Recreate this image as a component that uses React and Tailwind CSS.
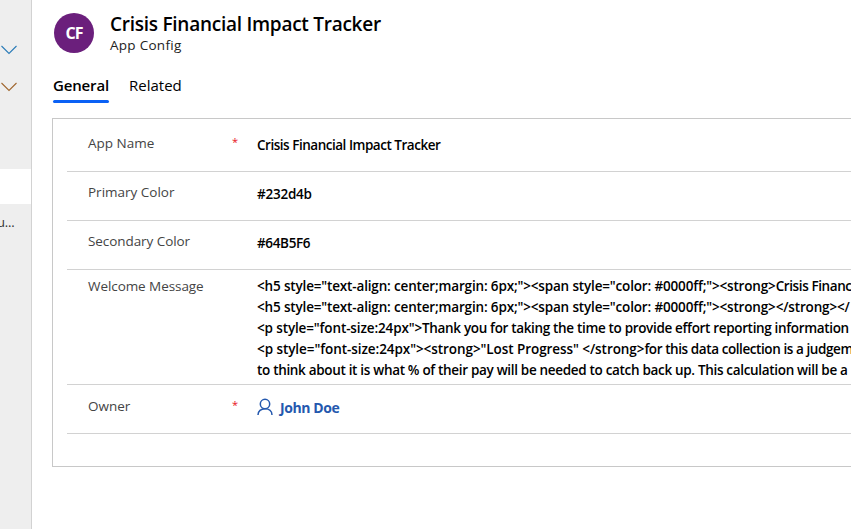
import React from "react";

function Chevron({ className }) {
  return (
    <svg className={className} width="18" height="10" viewBox="0 0 18 10" fill="none" stroke="currentColor" strokeWidth="1.1">
      <path d="M1.5 1 L9 8.5 L16.5 1" />
    </svg>
  );
}

function Person() {
  return (
    <svg className="mt-px" width="16" height="18" viewBox="0 0 16 18" fill="none" stroke="currentColor" strokeWidth="1.5">
      <circle cx="8" cy="6" r="4.7" />
      <path d="M1 17 C1 13.2 4 10.7 8 10.7 C12 10.7 15 13.2 15 17" />
    </svg>
  );
}

function Row({ label, labelClass, required, height, top, children }) {
  return (
    <div className={`flex border-b border-[#d2d2d2] pl-[21px] ${height}`}>
      <div className={`w-[144px] shrink-0 text-[13.5px] leading-5 text-[#444] ${top}`}>
        <span className={labelClass}>{label}</span>
      </div>
      <div className={`w-[25px] shrink-0 text-[11px] leading-[18px] text-[#e81123] ${top}`}>{required ? "*" : ""}</div>
      {children}
    </div>
  );
}

const value = "whitespace-pre text-[13.5px] leading-[21px] font-semibold text-black";

export default function App() {
  return (
    <div className="flex h-[529px] w-[851px] overflow-hidden bg-white font-['Open_Sans',sans-serif]">
      <aside className="h-full w-8 shrink-0 overflow-hidden border-r border-[#d2d2d2] bg-[#eeeeee]">
        <div className="flex h-[169px] flex-col pt-[45px]">
          <Chevron className="text-[#2b7cb8]" />
          <Chevron className="mt-[27px] text-[#a0672f]" />
        </div>
        <div className="h-[35px] bg-white" />
        <div className="-ml-[3px] pt-[8px] text-[13px] leading-5 text-[#333]"><span className="tracking-[-0.2px]">u...</span></div>
      </aside>
      <main className="min-w-0 flex-1">
        <header className="flex h-[67px] pt-[13px] pl-[22px]">
          <div className="flex size-10 items-center justify-center rounded-full bg-[#6b1f7c] text-[16px] font-bold tracking-[-1px] text-white">CF</div>
          <div className="pl-4 whitespace-nowrap">
            <h1 className="-mt-[3px] text-[19px] leading-7 font-semibold text-black"><span className="tracking-[-0.26px]">Crisis Financial Impact Tracker</span></h1>
            <p className="-mt-px text-[13.5px] leading-4 text-[#222]"><span className="tracking-[0.28px]">App Config</span></p>
          </div>
        </header>
        <nav className="flex h-[51px] gap-5 pt-[7px] pl-[21px] text-[15px] leading-[23px] text-black">
          <div className="w-14 font-semibold"><span className="tracking-[-0.15px]">General</span><div className="mt-[3px] h-[3px] rounded-full bg-[#0b61f5]" /></div>
          <div><span>Related</span></div>
        </nav>
        <section className="ml-5 h-[349px] border border-r-0 border-[#c8c8c8] pl-[14px]">
          <Row label="App Name" required height="h-[53px]" top="pt-[14px]">
            <div className={`pt-[16px] ${value}`}><span className="tracking-[-0.48px]">Crisis Financial Impact Tracker</span></div>
          </Row>
          <Row label="Primary Color" height="h-[49px]" top="pt-[10px]">
            <div className={`pt-[12px] ${value}`}><span className="tracking-[-0.25px]">#232d4b</span></div>
          </Row>
          <Row label="Secondary Color" labelClass="tracking-[-0.07px]" height="h-[49px]" top="pt-[10px]">
            <div className={`pt-[12px] ${value}`}><span className="tracking-[-0.35px]">#64B5F6</span></div>
          </Row>
          <Row label="Welcome Message" labelClass="tracking-[-0.07px]" height="h-[115px]" top="pt-[6px]">
            <div className={`pt-[6px] ${value}`}>
              <div className="tracking-[-0.16px]">{'<h5 style="text-align: center;margin: 6px;"><span style="color: #0000ff;"><strong>'}<span className="tracking-[-0.4px]">Crisis Financ</span></div>
              <div className="tracking-[-0.16px]">{'<h5 style="text-align: center;margin: 6px;"><span style="color: #0000ff;"><strong></strong></'}</div>
              <div className="tracking-[-0.13px]">{'<p style="font-size:24px">'}<span className="tracking-[-0.335px]">Thank you for taking the time to provide effort reporting information</span></div>
              <div className="tracking-[-0.07px]">{'<p style="font-size:24px"><strong>"Lost Progress" </strong>'}<span className="tracking-[-0.42px]">for this data collection is a judgem</span></div>
              <div className="tracking-[-0.32px]">to think about it is what % of their pay will be needed to catch back up. This calculation will be a</div>
            </div>
          </Row>
          <Row label="Owner" required height="h-[49px]" top="pt-[11px]">
            <div className="flex gap-[7px] pt-[12px] text-[14px] leading-[21px] font-bold text-[#2458ae]">
              <Person />
              <span className="tracking-[-0.4px]">John Doe</span>
            </div>
          </Row>
        </section>
      </main>
    </div>
  );
}
